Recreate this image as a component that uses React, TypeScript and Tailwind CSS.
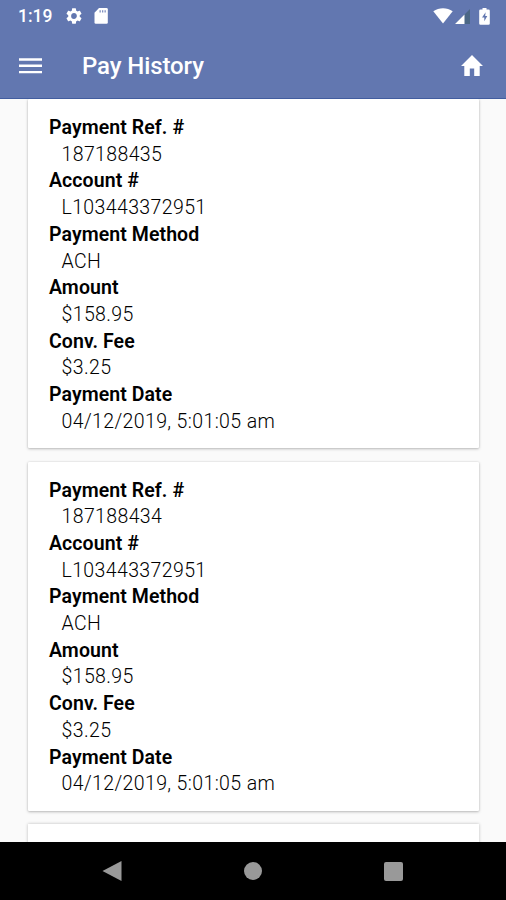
import React from 'react';

interface Payment {
  refNumber: string;
  account: string;
  method: string;
  amount: string;
  fee: string;
  date: string;
}

const payments: Payment[] = [
  {
    refNumber: '187188435',
    account: 'L103443372951',
    method: 'ACH',
    amount: '$158.95',
    fee: '$3.25',
    date: '04/12/2019, 5:01:05 am',
  },
  {
    refNumber: '187188434',
    account: 'L103443372951',
    method: 'ACH',
    amount: '$158.95',
    fee: '$3.25',
    date: '04/12/2019, 5:01:05 am',
  },
];

const StatusBar: React.FC = () => (
  <div className="flex h-8 shrink-0 items-center pl-[18px] pr-4 text-white">
    <span className="w-[48px] text-[17.5px] font-medium leading-8">1:19</span>
    <svg viewBox="2 2 20 20" className="h-4 w-4" fill="currentColor">
      <path d="M19.14 12.94c.04-.3.06-.61.06-.94 0-.32-.02-.64-.07-.94l2.03-1.58a.49.49 0 0 0 .12-.61l-1.92-3.32a.488.488 0 0 0-.59-.22l-2.39.96c-.5-.38-1.03-.7-1.62-.94l-.36-2.54a.484.484 0 0 0-.48-.41h-3.84c-.24 0-.43.17-.47.41l-.36 2.54c-.59.24-1.13.57-1.62.94l-2.39-.96c-.22-.08-.47 0-.59.22L2.74 8.87c-.12.21-.08.47.12.61l2.03 1.58c-.05.3-.09.63-.09.94s.02.64.07.94l-2.03 1.58a.49.49 0 0 0-.12.61l1.92 3.32c.12.22.37.29.59.22l2.39-.96c.5.38 1.03.7 1.62.94l.36 2.54c.05.24.24.41.48.41h3.84c.24 0 .44-.17.47-.41l.36-2.54c.59-.24 1.13-.56 1.62-.94l2.39.96c.22.08.47 0 .59-.22l1.92-3.32c.12-.22.07-.47-.12-.61l-2.01-1.58zM12 15.6A3.61 3.61 0 0 1 8.4 12c0-1.98 1.62-3.6 3.6-3.6s3.6 1.62 3.6 3.6-1.62 3.6-3.6 3.6z" />
    </svg>
    <svg viewBox="0 0 14 16" className="ml-3 h-4 w-3.5" fill="currentColor">
      <path d="M5 0h7.5A1.3 1.3 0 0 1 13.8 1.3V14.5A1.3 1.3 0 0 1 12.5 15.8H1.8A1.3 1.3 0 0 1 .5 14.5V4.8z" />
      <path d="M5.5 2.2h1.3v2.3H5.5zM8 2.2h1.3v2.3H8zM10.5 2.2h1.3v2.3h-1.3z" fill="#7f8fc0" />
    </svg>
    <div className="ml-auto flex items-center">
      <svg viewBox="0 0 20 16" className="h-4 w-5" fill="currentColor">
        <path d="M.3 3.2C6-.9 14-.9 19.7 3.2L10 15.5z" />
      </svg>
      <svg viewBox="0 0 15 15" className="ml-0.5 h-[15px] w-[15px]">
        <path d="M15 0v15H0z" fill="#4b6785" />
        <path d="M9.5 5.5V15H0z" fill="#fff" />
      </svg>
      <svg viewBox="0 0 11 17" className="ml-[9px] h-[17px] w-[11px]">
        <path d="M3.5 0h4v1.5h2A1.3 1.3 0 0 1 10.8 2.8V15.5A1.3 1.3 0 0 1 9.5 16.8h-8A1.3 1.3 0 0 1 .2 15.5V2.8A1.3 1.3 0 0 1 1.5 1.5h2z" fill="#fff" />
        <path d="M6.6 4.3L3 9.5h2.3v3.8l3-5.2H6.2z" fill="#6277b0" />
      </svg>
    </div>
  </div>
);

const AppBar: React.FC = () => (
  <div className="flex h-[66px] items-center pl-[19px] pr-[23px] pt-0.5 text-white">
    <button aria-label="Menu">
      <svg viewBox="0 0 23 16" className="h-4 w-[23px]" fill="currentColor">
        <path d="M0 .3h23v2.4H0zM0 6.6h23V9H0zM0 12.9h23v2.4H0z" />
      </svg>
    </button>
    <h1 className="ml-10 text-[24px] font-medium leading-8 tracking-[-0.1px]">Pay History</h1>
    <button aria-label="Home" className="ml-auto">
      <svg viewBox="2 3 20 17" className="mb-0.5 h-[21px] w-[22px]" fill="currentColor" preserveAspectRatio="none">
        <path d="M10 20v-6h4v6h5v-8h3L12 3 2 12h3v8z" />
      </svg>
    </button>
  </div>
);

interface FieldProps {
  label: string;
  value: string;
}

const Field: React.FC<FieldProps> = ({ label, value }) => (
  <>
    <dt className="font-semibold tracking-[0.08px]">{label}</dt>
    <dd className="pl-[12.5px] font-light tracking-[0.38px]">{value}</dd>
  </>
);

const PaymentCard: React.FC<{ payment: Payment }> = ({ payment }) => (
  <div className="h-[349px] shrink-0 rounded-[1px] bg-white pl-[21px] pt-4 shadow-[0_1px_3px_rgba(0,0,0,0.25),0_0_2px_rgba(0,0,0,0.12)]">
    <dl className="text-[19.5px] leading-[26.7px] text-black">
      <Field label="Payment Ref. #" value={payment.refNumber} />
      <Field label="Account #" value={payment.account} />
      <Field label="Payment Method" value={payment.method} />
      <Field label="Amount" value={payment.amount} />
      <Field label="Conv. Fee" value={payment.fee} />
      <Field label="Payment Date" value={payment.date} />
    </dl>
  </div>
);

const NavigationBar: React.FC = () => (
  <nav className="flex h-[58px] shrink-0 items-center justify-between bg-black pl-[102px] pr-[103px] text-[#999]">
    <svg viewBox="0 0 20 20" className="h-5 w-5" fill="currentColor">
      <path d="M19.5 0v20L.5 10z" />
    </svg>
    <span className="h-[18px] w-[18px] rounded-full bg-[#999]" />
    <span className="h-[19px] w-[19px] rounded-[2px] bg-[#999]" />
  </nav>
);

const App: React.FC = () => {
  return (
    <div className="flex h-[900px] w-[506px] flex-col overflow-hidden bg-[#fafafa] font-[Roboto,sans-serif]">
      <header className="h-[99px] shrink-0 border-b border-[#425d9f] bg-[#6277b0]">
        <StatusBar />
        <AppBar />
      </header>
      <main className="flex min-h-0 flex-1 flex-col gap-[13.5px] overflow-hidden pl-7 pr-[27px]">
        {payments.map((payment) => (
          <PaymentCard key={payment.refNumber} payment={payment} />
        ))}
        <div className="h-20 shrink-0 bg-white shadow-[0_0_3px_rgba(0,0,0,0.25)]" />
      </main>
      <NavigationBar />
    </div>
  );
};

export default App;
